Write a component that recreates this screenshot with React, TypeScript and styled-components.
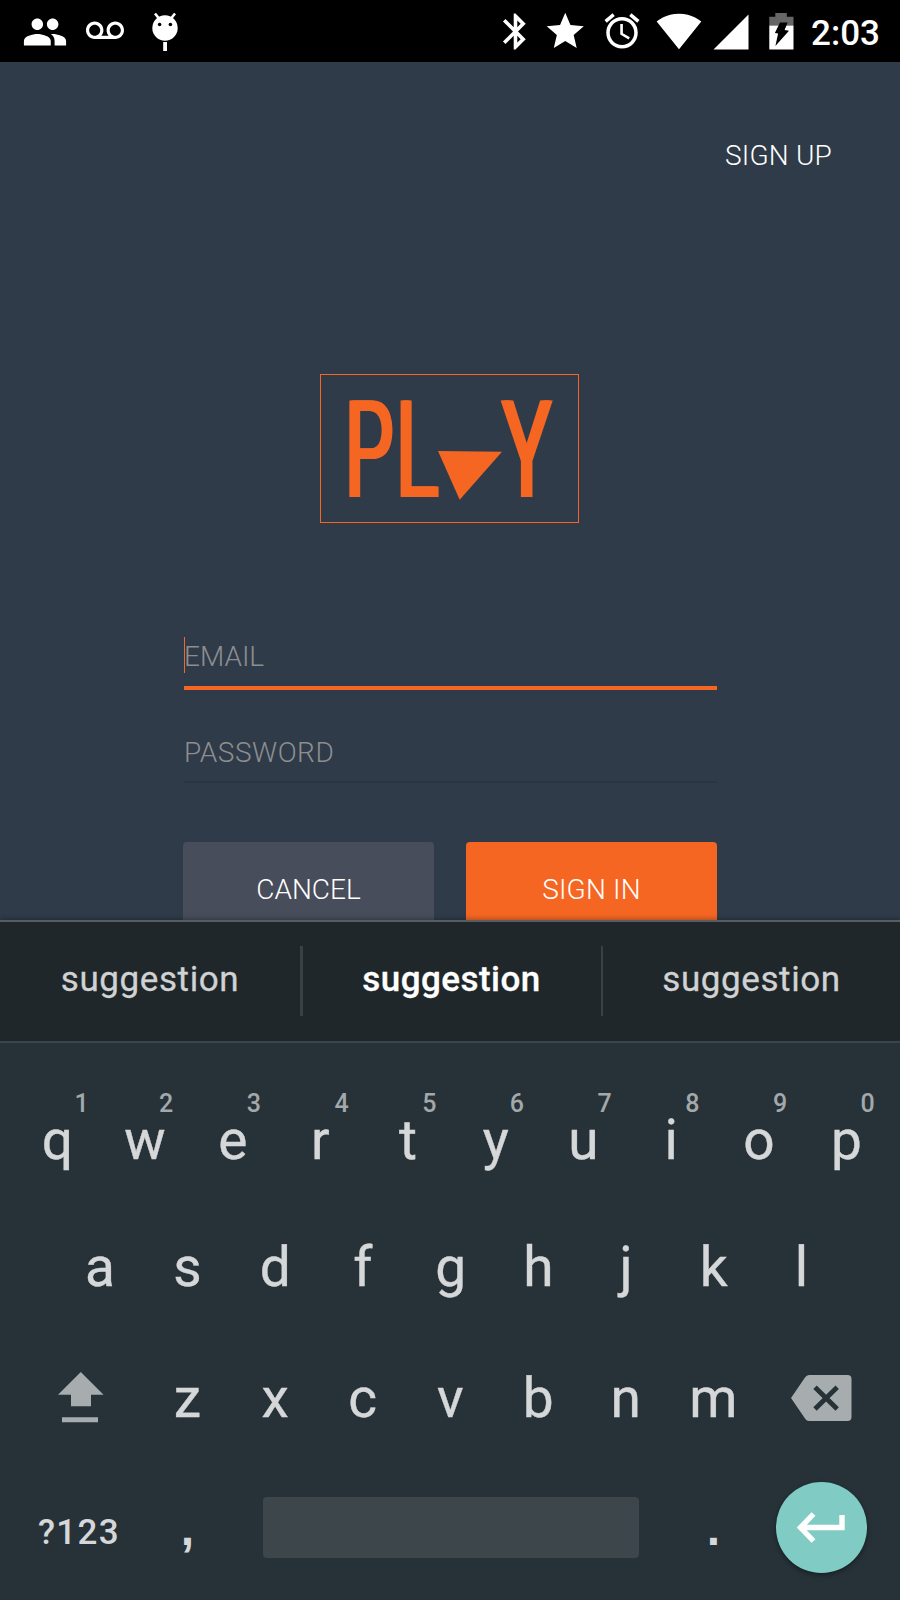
import React from 'react';
import styled, { createGlobalStyle } from 'styled-components';
import {
  MdAccessAlarm,
  MdBluetooth,
  MdPeople,
  MdSignalCellular4Bar,
  MdSignalWifi4Bar,
  MdStar,
  MdVoicemail,
} from 'react-icons/md';

const GlobalStyle = createGlobalStyle`
  * { box-sizing: border-box; }
  body { margin: 0; background: #000; }
`;

const Screen = styled.main`
  display: flex;
  flex-direction: column;
  width: 900px;
  height: 1600px;
  overflow: hidden;
  font-family: Roboto, sans-serif;
  background: #2f3b49;
`;

const StatusBar = styled.header`
  display: flex;
  align-items: center;
  justify-content: space-between;
  flex: none;
  height: 62px;
  padding: 0 20px 0 22px;
  color: #fff;
  background: #000;
  svg { display: block; flex: none; }
`;

const StatusGroup = styled.div`
  display: flex;
  align-items: center;
`;

const StatusIcon = styled.span<{ $left?: number; $drop?: number }>`
  display: block;
  margin-left: ${(p) => p.$left ?? 0}px;
  padding-top: ${(p) => p.$drop ?? 0}px;
`;

const Clock = styled.time`
  margin-left: 17.5px;
  padding-top: 6px;
  font-size: 35px;
  font-weight: 500;
  line-height: 40px;
`;

const Content = styled.section`
  display: flex;
  flex-direction: column;
  align-items: center;
  flex: none;
  height: 858px;
  overflow: hidden;
`;

const SignUp = styled.button`
  align-self: flex-end;
  margin: 74px 68px 0 0;
  padding: 0;
  border: 0;
  background: none;
  color: #fff;
  font: 300 28px/40px Roboto, sans-serif;
  letter-spacing: 0.2px;
`;

const Logo = styled.div`
  display: flex;
  align-items: flex-start;
  width: 259px;
  height: 149px;
  margin: 198px 0 0 -1px;
  padding-left: 22px;
  border: 1px solid #f56623;
  color: #f56623;
  flex: none;
`;

const LogoLetter = styled.span<{ $width: number; $scale: number; $left?: number }>`
  display: block;
  flex: none;
  width: ${(p) => p.$width}px;
  margin-left: ${(p) => p.$left ?? 0}px;
  font-size: 135.6px;
  line-height: 152px;
  text-shadow: 6px 0 0 #f56623, 3px 0 0 #f56623;
  transform: scaleX(${(p) => p.$scale});
  transform-origin: 0 0;
`;

const Triangle = styled.svg`
  display: block;
  flex: none;
  width: 64px;
  height: 50px;
  margin-top: 76px;
`;

const Form = styled.form`
  display: flex;
  flex-direction: column;
  flex: none;
  width: 534px;
  margin-top: 114px;
`;

const Field = styled.label<{ $active?: boolean }>`
  display: flex;
  align-items: flex-start;
  height: ${(p) => (p.$active ? 53 : 93)}px;
  margin-left: 1px;
  padding-top: ${(p) => (p.$active ? 0 : 43)}px;
  border-bottom: ${(p) => (p.$active ? '4px solid #f56623' : '2px solid #2a3441')};
  color: #8c8e90;
  font-size: 28px;
  font-weight: 300;
  line-height: 39px;
  letter-spacing: ${(p) => (p.$active ? 0 : 0.5)}px;
`;

const Caret = styled.i`
  width: 1px;
  height: 36px;
  margin-right: -1px;
  background: #f56623;
`;

const Actions = styled.div`
  display: flex;
  justify-content: space-between;
  margin-top: 59px;
`;

const ActionButton = styled.button<{ $primary?: boolean }>`
  width: 251px;
  height: 95px;
  padding: 1px 0 0;
  border: 0;
  border-radius: 4px;
  color: #fff;
  background: ${(p) => (p.$primary ? '#f56623' : '#474d5a')};
  font: 300 28px/40px Roboto, sans-serif;
  letter-spacing: ${(p) => (p.$primary ? 0.2 : 0)}px;
`;

const Keyboard = styled.section`
  display: flex;
  flex-direction: column;
  flex: none;
  height: 680px;
  color: #d5d7d9;
  background: #263238;
  box-shadow: 0 -1px 5px rgba(0, 0, 0, 0.3);
`;

const Suggestions = styled.div`
  display: flex;
  align-items: center;
  flex: none;
  height: 123px;
  border-top: 2px solid #575d60;
  border-bottom: 2px solid #3b4448;
  background: #20272a;
`;

const Suggestion = styled.span<{ $main?: boolean; $width: number }>`
  flex: none;
  width: ${(p) => p.$width}px;
  text-align: center;
  color: ${(p) => (p.$main ? '#fff' : '#d0d2d3')};
  font-size: 35px;
  font-weight: ${(p) => (p.$main ? 500 : 400)};
  line-height: 70px;
  letter-spacing: ${(p) => (p.$main ? 0.45 : 0.6)}px;
  padding-bottom: 4px;
  -webkit-text-stroke: 0.3px currentColor;
`;

const Divider = styled.i`
  width: 3px;
  height: 70px;
  margin-top: -1px;
  background: #3a4144;
`;

const Row = styled.div<{ $height: number; $top?: number; $left: number }>`
  display: flex;
  flex: none;
  align-items: center;
  height: ${(p) => p.$height}px;
  margin-top: ${(p) => p.$top ?? 0}px;
  padding-left: ${(p) => p.$left}px;
`;

const Key = styled.span`
  position: relative;
  flex: none;
  width: 87.7px;
  text-align: center;
  font-size: 55px;
  line-height: 100px;
  -webkit-text-stroke: 0.4px currentColor;
`;

const Hint = styled.small<{ $shift: number }>`
  position: absolute;
  left: ${(p) => 50 + p.$shift}px;
  top: -1px;
  width: 30px;
  text-align: center;
  color: #a3a8ab;
  font-size: 25px;
  font-weight: 500;
  line-height: 30px;
  -webkit-text-stroke: 0;
`;

const IconKey = styled.span<{ $width: number; $left: number; $right?: number }>`
  flex: none;
  width: ${(p) => p.$width}px;
  margin: 0 ${(p) => p.$right ?? 0}px 0 ${(p) => p.$left}px;
  svg { display: block; }
`;

const SymbolsKey = styled.span`
  width: 105px;
  padding-top: 10px;
  font-size: 35px;
  font-weight: 500;
  letter-spacing: 1.3px;
`;

const Punctuation = styled.span`
  width: 88px;
  padding: 2px 0 0 1px;
  text-align: center;
  font-family: 'Liberation Sans', Arial, sans-serif;
  font-size: 48px;
  font-weight: 700;
  line-height: 60px;
`;

const SpaceBar = styled.span`
  width: 376px;
  height: 61px;
  margin: 0 30px 0 32px;
  border-radius: 4px;
  background: #3c464b;
`;

const EnterKey = styled.button`
  display: flex;
  align-items: center;
  justify-content: center;
  width: 91px;
  height: 91px;
  margin: 0 0 0 19px;
  padding: 0 1px 0 0;
  border: 0;
  border-radius: 50%;
  background: #80cbc4;
  box-shadow: 0 2px 5px rgba(0, 0, 0, 0.4);
`;

const DroidIcon = () => (
  <svg width="28" height="40" viewBox="151 12 28 40">
    <path d="M155 13.5l4 5M175 13.5l-4 5" stroke="#fff" strokeWidth="2.6" />
    <circle cx="165" cy="28" r="12.7" fill="#fff" />
    <circle cx="159.6" cy="24.5" r="1.8" />
    <circle cx="170.4" cy="24.5" r="1.8" />
    <path d="M163.2 42h3.8v9h-3.8z" fill="#fff" />
  </svg>
);

const BatteryIcon = () => (
  <svg width="25" height="37" viewBox="769 12.5 25 37">
    <path d="M769.3 25v-8.8h6v-3.6h11.5v3.6h6.7V25z" fill="#666" />
    <path d="M769.3 25h24.2v24h-24.2z" fill="#fff" />
    <path d="M780 22h7.6l-3 7.5 4.4.8-13.6 15.2 2.7-12.5-3.2-.5z" fill="#000" />
  </svg>
);

const ShiftIcon = () => (
  <svg width="46" height="51" viewBox="0 0 46 51" fill="#a7acaf">
    <path d="M22.8 0L45.6 22.7H33V34.3H13V22.7H0z" />
    <path d="M4 45.2h36v5.1H4z" />
  </svg>
);

const BackspaceIcon = () => (
  <svg width="61" height="46" viewBox="0 0 61 46">
    <path d="M18 0H56.5Q60.5 0 60.5 4V42Q60.5 46 56.5 46H18Q15.500 46 14 43.5L0 23 14 2.5Q15.500 0 18 0z" fill="#a7acaf" />
    <path d="M24 12.200L46.200 34M46.200 12.200L24 34" stroke="#263238" strokeWidth="4.800" />
  </svg>
);

const EnterIcon = () => (
  <svg width="48" height="32" viewBox="0 0 48 32" fill="none" stroke="#fff" strokeWidth="5.400">
    <path d="M16.500 2L3.500 15.500L16.500 29" />
    <path d="M4 15.500H45V3" />
  </svg>
);

const TOP_KEYS = 'qwertyuiop'.split('');
const HOME_KEYS = 'asdfghjkl'.split('');
const BOTTOM_KEYS = 'zxcvbnm'.split('');

export default function App() {
  return (
    <Screen>
      <GlobalStyle />
      <StatusBar>
        <StatusGroup>
          <StatusIcon $drop={1}><MdPeople size={46} /></StatusIcon>
          <StatusIcon $left={18}><MdVoicemail size={38} /></StatusIcon>
          <StatusIcon $left={27} $drop={2}><DroidIcon /></StatusIcon>
        </StatusGroup>
        <StatusGroup>
          <StatusIcon><MdBluetooth size={43} /></StatusIcon>
          <StatusIcon $left={6}><MdStar size={44.5} /></StatusIcon>
          <StatusIcon $left={13.5}><MdAccessAlarm size={42} /></StatusIcon>
          <StatusIcon $left={13}><MdSignalWifi4Bar size={46} /></StatusIcon>
          <StatusIcon $left={8} $drop={1}><MdSignalCellular4Bar size={42} /></StatusIcon>
          <StatusIcon $left={17}><BatteryIcon /></StatusIcon>
          <Clock>2:03</Clock>
        </StatusGroup>
      </StatusBar>

      <Content>
        <SignUp type="button">SIGN UP</SignUp>
        <Logo>
          <LogoLetter $width={50.5} $scale={0.57}>P</LogoLetter>
          <LogoLetter $width={44.3} $scale={0.59}>L</LogoLetter>
          <Triangle viewBox="0 0 64 50">
            <path d="M0 0L64 .8L21.700 48.700z" fill="#f56623" />
          </Triangle>
          <LogoLetter $width={53} $scale={0.61} $left={-2}>Y</LogoLetter>
        </Logo>
        <Form>
          <Field $active><Caret />EMAIL</Field>
          <Field>PASSWORD</Field>
          <Actions>
            <ActionButton type="button">CANCEL</ActionButton>
            <ActionButton type="button" $primary>SIGN IN</ActionButton>
          </Actions>
        </Form>
      </Content>

      <Keyboard>
        <Suggestions>
          <Suggestion $width={300}>suggestion</Suggestion>
          <Divider />
          <Suggestion $main $width={298}>suggestion</Suggestion>
          <Divider />
          <Suggestion $width={297}>suggestion</Suggestion>
        </Suggestions>
        <Row $height={129} $top={32} $left={13.5}>
          {TOP_KEYS.map((letter, i) => (
            <Key key={letter}>
              {letter}
              <Hint $shift={i === 0 ? 3 : 0}>{(i + 1) % 10}</Hint>
            </Key>
          ))}
        </Row>
        <Row $height={126} $left={56}>
          {HOME_KEYS.map((letter) => <Key key={letter}>{letter}</Key>)}
        </Row>
        <Row $height={135} $left={0}>
          <IconKey $width={46} $left={58} $right={39.5}><ShiftIcon /></IconKey>
          {BOTTOM_KEYS.map((letter) => <Key key={letter}>{letter}</Key>)}
          <IconKey $width={61} $left={34}><BackspaceIcon /></IconKey>
        </Row>
        <Row $height={125} $left={38}>
          <SymbolsKey>?123</SymbolsKey>
          <Punctuation>,</Punctuation>
          <SpaceBar />
          <Punctuation>.</Punctuation>
          <EnterKey type="button"><EnterIcon /></EnterKey>
        </Row>
      </Keyboard>
    </Screen>
  );
}
